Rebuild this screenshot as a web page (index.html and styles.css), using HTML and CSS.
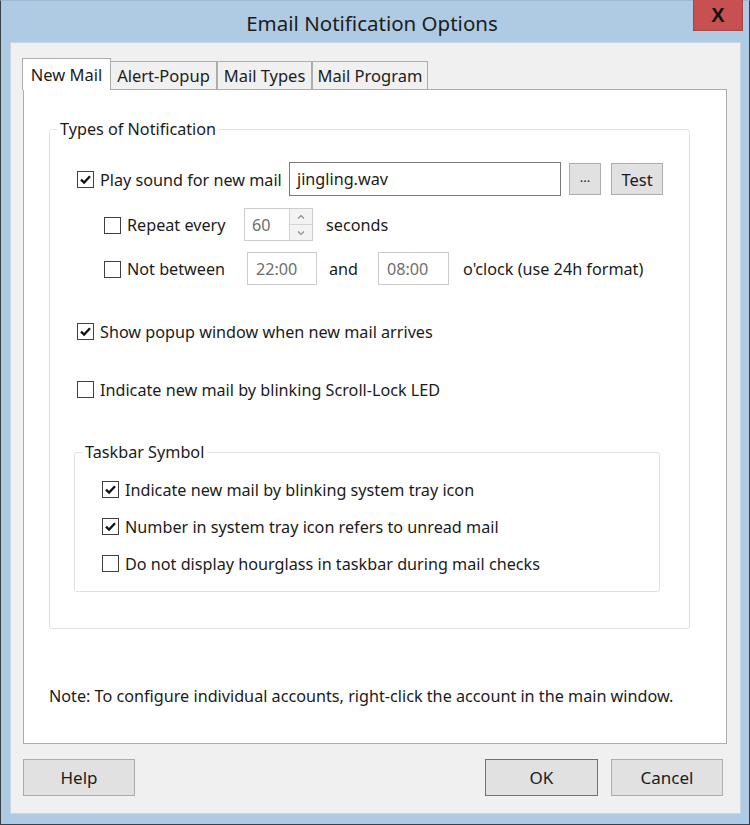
FILE: index.html
```html
<!DOCTYPE html>
<html lang="en">
<head>
    <meta charset="UTF-8">
    <title>Email Notification Options</title>
    <link rel="stylesheet" href="styles.css">
</head>
<body>
    <div class="window">
        <div class="titlebar">
            <span></span>
            <div class="title">Email Notification Options</div>
            <div class="close">X</div>
        </div>
        <div class="client">
            <div class="tabs">
                <div class="tab active tab-new">New Mail</div>
                <div class="tab tab-alert">Alert-Popup</div>
                <div class="tab tab-types">Mail Types</div>
                <div class="tab tab-program">Mail Program</div>
            </div>
            <div class="panel">
                <fieldset class="group outer">
                    <legend>Types of Notification</legend>

                    <div class="row row-sound">
                        <div class="check lbl-sound">
                            <span class="box"><svg viewBox="0 0 15 15"><path d="M3 7.6 L6.1 10.6 L12 4.2"/></svg></span>
                            Play sound for new mail
                        </div>
                        <div class="field file">jingling.wav</div>
                        <div class="btn dots">...</div>
                        <div class="btn test">Test</div>
                    </div>

                    <div class="row row-repeat sub">
                        <div class="check lbl-repeat">
                            <span class="box"></span>
                            Repeat every
                        </div>
                        <div class="spin">
                            <div class="spin-val">60</div>
                            <div class="spin-btns">
                                <div class="spin-btn"><svg viewBox="0 0 12 8"><path d="M3 5.5 L6 2.5 L9 5.5"/></svg></div>
                                <div class="spin-btn"><svg viewBox="0 0 12 8"><path d="M3 2.5 L6 5.5 L9 2.5"/></svg></div>
                            </div>
                        </div>
                        <span class="after-spin">seconds</span>
                    </div>

                    <div class="row row-between sub">
                        <div class="check lbl-between">
                            <span class="box"></span>
                            Not between
                        </div>
                        <div class="field time">22:00</div>
                        <span class="and">and</span>
                        <div class="field time time-to">08:00</div>
                        <span class="after-time">o'clock (use 24h format)</span>
                    </div>

                    <div class="row single row-popup">
                        <div class="check">
                            <span class="box"><svg viewBox="0 0 15 15"><path d="M3 7.6 L6.1 10.6 L12 4.2"/></svg></span>
                            Show popup window when new mail arrives
                        </div>
                    </div>

                    <div class="row single row-led">
                        <div class="check">
                            <span class="box"></span>
                            Indicate new mail by blinking Scroll-Lock LED
                        </div>
                    </div>

                    <fieldset class="group inner">
                        <legend>Taskbar Symbol</legend>
                        <div class="row single">
                            <div class="check">
                                <span class="box"><svg viewBox="0 0 15 15"><path d="M3 7.6 L6.1 10.6 L12 4.2"/></svg></span>
                                Indicate new mail by blinking system tray icon
                            </div>
                        </div>
                        <div class="row single">
                            <div class="check">
                                <span class="box"><svg viewBox="0 0 15 15"><path d="M3 7.6 L6.1 10.6 L12 4.2"/></svg></span>
                                Number in system tray icon refers to unread mail
                            </div>
                        </div>
                        <div class="row single">
                            <div class="check">
                                <span class="box"></span>
                                Do not display hourglass in taskbar during mail checks
                            </div>
                        </div>
                    </fieldset>
                </fieldset>

                <p class="note">Note: To configure individual accounts, right-click the account in the main window.</p>
            </div>
            <div class="actions">
                <div class="btn dlg">Help</div>
                <div class="spacer"></div>
                <div class="btn dlg default">OK</div>
                <div class="btn dlg">Cancel</div>
            </div>
        </div>
    </div>
</body>
</html>
```

FILE: styles.css
```css
* {
    box-sizing: border-box;
}
body {
    margin: 0;
    font-family: 'Noto Sans', 'Open Sans', Arial, sans-serif;
    font-size: 16.2px;
    color: #1b1b1b;
    background: #fff;
}
.window {
    width: 750px;
    height: 825px;
    background: #afcbe4;
    border: 1px solid #3b4047;
    border-top-color: #9fb9d1;
    display: flex;
    flex-direction: column;
}
.titlebar {
    height: 41px;
    display: grid;
    grid-template-columns: 1fr auto 1fr;
    align-items: start;
    padding-right: 6px;
}
.title {
    font-size: 20.5px;
    color: #1c1c1c;
    line-height: 22px;
    margin-top: 11px;
}
.close {
    justify-self: end;
    width: 50px;
    height: 31px;
    margin-top: -1px;
    background: #c75050;
    border: 1px solid #a84444;
    border-top: none;
    font-family: 'Liberation Sans', Arial, sans-serif;
    font-weight: 700;
    font-size: 20px;
    color: #111;
    display: flex;
    align-items: center;
    justify-content: center;
}
.client {
    height: 772px;
    margin: 0 8px 0 9px;
    background: #f0f0f0;
    border: 1px solid #c5d6e6;
    padding-top: 15px;
}

/* tabs */
.tabs {
    display: flex;
    align-items: flex-end;
    margin-left: 11px;
    height: 31px;
}
.tab {
    height: 28px;
    background: #f0f0f0;
    border: 1px solid #adadad;
    border-bottom: none;
    border-right: none;
    display: flex;
    align-items: center;
    justify-content: center;
    font-size: 16.5px;
    color: #1c1c1c;
}
.tab.active {
    height: 32px;
    margin-bottom: -1px;
    background: #fff;
    border-right: 1px solid #adadad;
    position: relative;
    z-index: 1;
    padding-bottom: 1px;
}
.tab-new { width: 89px; }
.tab-alert { width: 105px; border-left: none; }
.tab-types { width: 95px; border-left-width: 2px; }
.tab-program { width: 117px; border-left-width: 2px; border-right: 1px solid #adadad; }

.panel {
    width: 704px;
    height: 655px;
    margin-left: 12px;
    background: #fff;
    border: 1px solid #adadad;
    padding: 28px 0 0 25px;
    display: flex;
    flex-direction: column;
}

/* group boxes */
.group {
    margin: 0;
    border: 1px solid #dce2e8;
    border-radius: 3px;
    min-width: 0;
}
.group legend {
    padding: 0 3px;
    line-height: 22px;
    font-size: 16.2px;
}
.group.outer {
    width: 641px;
    padding: 22px 0 36px 24px;
}
.group.outer > legend {
    margin-left: -17px;
}
.group.inner {
    width: 586px;
    margin-top: 42px;
    padding: 16px 0 18px 27px;
}
.group.inner > legend {
    margin-left: -20px;
}
.group.inner .row {
    margin-left: 0;
    height: 20px;
}
.group.inner .row + .row {
    margin-top: 17px;
}

.row {
    display: flex;
    align-items: center;
    margin-left: 3px;
    white-space: nowrap;
}
.row.sub {
    margin-left: 30px;
}
.row-sound { height: 34px; }
.row-repeat { height: 33px; margin-top: 12px; }
.row-between { height: 33px; margin-top: 11px; }
.row.single { height: 20px; }
.row-popup { margin-top: 36px; }
.row-led { margin-top: 38px; }

.check {
    display: flex;
    align-items: center;
    padding-top: 1px;
}
.box {
    width: 17px;
    height: 17px;
    border: 1px solid #3f3f3f;
    background: #fff;
    margin-right: 6px;
    flex: none;
}
.box svg {
    display: block;
    width: 15px;
    height: 15px;
}
.box path {
    fill: none;
    stroke: #141414;
    stroke-width: 2.3;
}
.lbl-sound { width: 212px; }
.lbl-repeat { width: 140px; }
.lbl-between { width: 143px; }

.field {
    height: 34px;
    border: 1px solid #7a7a7a;
    background: #fff;
    display: flex;
    align-items: center;
    padding-left: 7px;
}
.field.file {
    width: 272px;
}
.field.time {
    width: 70px;
    height: 33px;
    border-color: #cccccc;
    color: #6e6e6e;
    padding-left: 8px;
}
.field.time-to {
    width: 71px;
}
.and {
    width: 49px;
    margin-left: 12px;
}
.after-time {
    margin-left: 14px;
}

.spin {
    width: 69px;
    height: 33px;
    border: 1px solid #cccccc;
    display: flex;
    background: #fff;
}
.spin-val {
    flex: 1;
    display: flex;
    align-items: center;
    padding-left: 7px;
    color: #6e6e6e;
}
.spin-btns {
    width: 23px;
    border-left: 1px solid #d4d4d4;
    display: flex;
    flex-direction: column;
}
.spin-btn {
    flex: 1;
    background: #f3f3f3;
    display: flex;
    align-items: center;
    justify-content: center;
}
.spin-btn + .spin-btn {
    border-top: 1px solid #d4d4d4;
}
.spin-btn svg {
    width: 12px;
    height: 8px;
}
.spin-btn path {
    fill: none;
    stroke: #8a8a8a;
    stroke-width: 1.1;
}
.after-spin {
    margin-left: 13px;
}

/* buttons */
.btn {
    background: #e1e1e1;
    border: 1px solid #adadad;
    display: flex;
    align-items: center;
    justify-content: center;
    color: #1b1b1b;
}
.btn.dots {
    width: 32px;
    height: 32px;
    margin-left: 8px;
    font-size: 13px;
    padding-bottom: 4px;
}
.btn.test {
    width: 52px;
    height: 32px;
    margin-left: 10px;
    font-size: 16.5px;
}

.note {
    margin: 57px 0 0 0;
    line-height: 20px;
}

.actions {
    display: flex;
    margin: 15px 0 0 12px;
    width: 700px;
}
.spacer {
    flex: 1;
}
.btn.dlg {
    width: 112px;
    height: 37px;
    font-size: 17px;
}
.btn.dlg.default {
    width: 113px;
    border-color: #3c7fb1;
    margin-right: 13px;
}
```
